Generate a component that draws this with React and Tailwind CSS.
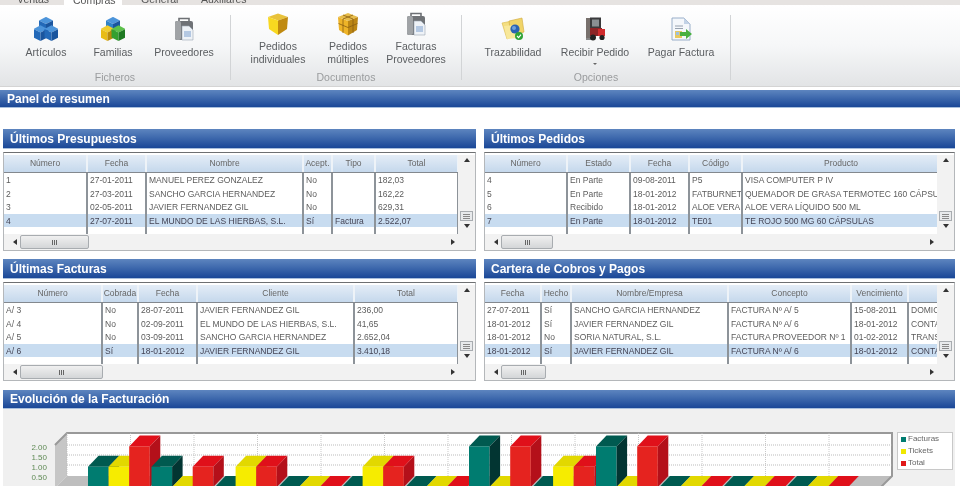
import React from "react";

function Cube({ x, y, s, t, l, r }) {
  const a = s * 0.82, b = s * 0.42;
  return (
    <g>
      <polygon points={`${x},${y} ${x + a},${y - b} ${x},${y - 2 * b} ${x - a},${y - b}`} fill={t} />
      <polygon points={`${x},${y} ${x - a},${y - b} ${x - a},${y - b + s} ${x},${y + s}`} fill={l} />
      <polygon points={`${x},${y} ${x + a},${y - b} ${x + a},${y - b + s} ${x},${y + s}`} fill={r} />
    </g>
  );
}

const Svg = ({ children }) => (
  <svg viewBox="0 0 24 24" className="w-6 h-6 shrink-0">{children}</svg>
);

const Blue = { t: "#4c94da", l: "#2369b8", r: "#1a559e" };

const IconArticulos = () => (
  <Svg>
    <Cube x={12} y={7} s={8.5} {...Blue} />
    <Cube x={6.5} y={15.5} s={8.5} {...Blue} />
    <Cube x={17.5} y={15.5} s={8.5} {...Blue} />
  </Svg>
);
const IconFamilias = () => (
  <Svg>
    <Cube x={12} y={7} s={8.5} t="#4c94da" l="#2f82c8" r="#1a559e" />
    <Cube x={6.5} y={15.5} s={8.5} t="#f0cd2e" l="#e8bc16" r="#b98a0a" />
    <Cube x={17.5} y={15.5} s={8.5} t="#5cc04a" l="#34a030" r="#1f7a22" />
  </Svg>
);
const IconCase = () => (
  <Svg>
    <path d="M7 4 V1.5 H17 V4" fill="none" stroke="#6d7074" strokeWidth="1.6" />
    <rect x="3" y="4" width="18" height="19" rx="2" fill="#6f7276" />
    <rect x="3" y="4" width="6" height="19" rx="2" fill="#a0a3a6" />
    <path d="M10 9 H17 L21 13 V23 H10 Z" fill="#eef2f7" stroke="#9aa6b4" strokeWidth="0.6" />
    <rect x="12" y="14" width="7" height="6" fill="#b4c8e2" />
  </Svg>
);
const IconBox = () => (
  <Svg>
    <polygon points="2,5 12,1.5 22,5 12,8.5" fill="#e8c23a" />
    <polygon points="2,5 12,8.5 12,23 3,17" fill="#f8d820" />
    <polygon points="22,5 12,8.5 12,23 21,17" fill="#c08a10" />
  </Svg>
);
const IconBoxes = () => (
  <Svg>
    <polygon points="2,5 12,1 22,5 12,9" fill="#e6bc4a" />
    <polygon points="2,5 12,9 12,23.5 3,18" fill="#eeb428" />
    <polygon points="22,5 12,9 12,23.5 21,18" fill="#bc8614" />
    <path d="M7 3 L17 7 V21 M17 3 L7 7 V21 M2.5 11.5 L12 15.5 L21.5 11.5" fill="none" stroke="#8a5e10" strokeWidth="0.8" />
  </Svg>
);
const IconTraza = () => (
  <Svg>
    <path d="M1 6 L16 3 L19 16 L6 22 Z" fill="#f4de80" stroke="#d8b848" strokeWidth="0.6" />
    <path d="M8 4 L21 1 L23 15 L10 20 Z" fill="#f0d468" stroke="#d0aa40" strokeWidth="0.6" />
    <path d="M3 9 L15 8 L16 21 L6 22 Z" fill="#f8e89a" />
    <circle cx="14" cy="12" r="4.6" fill="#2a62b4" />
    <circle cx="13" cy="11" r="2" fill="#6fa0dc" />
    <circle cx="18" cy="19" r="4" fill="#2fa336" />
    <path d="M16 19 L17.6 20.6 L20 17.6" fill="none" stroke="#fff" strokeWidth="1.1" />
  </Svg>
);
const IconFork = () => (
  <Svg>
    <rect x="3" y="1" width="4" height="20" fill="#77706c" />
    <path d="M3 22 H10" stroke="#555" strokeWidth="1.4" />
    <path d="M7 0.5 H18 V11 H7 Z" fill="#3a3a3c" />
    <rect x="9" y="2.5" width="7" height="7" fill="#8a8f92" />
    <rect x="7" y="11" width="12" height="8" fill="#8c2426" />
    <rect x="15" y="12" width="7" height="7" fill="#d02c2e" />
    <circle cx="10" cy="20.5" r="3" fill="#222" />
    <circle cx="19" cy="20.5" r="2.6" fill="#222" />
  </Svg>
);
const IconPay = () => (
  <Svg>
    <path d="M3 1 H15 L21 7 V23 H3 Z" fill="#f4f7fb" stroke="#8fa6c4" strokeWidth="0.9" />
    <path d="M15 1 V7 H21 Z" fill="#c2d2e6" />
    <path d="M6 9 H14 M6 11.5 H14" stroke="#7f8c9c" strokeWidth="0.8" />
    <rect x="6" y="14" width="7" height="7" fill="#e6c860" />
    <rect x="7" y="15" width="3" height="3" fill="#9cc0e4" />
    <path d="M11 15 L17 15 L17 12 L23 17 L17 22 L17 19 L11 19 Z" fill="#48b040" />
  </Svg>
);

function Btn({ w, icon, lines, gap }) {
  return (
    <div className={`flex flex-col items-center ${w}`}>
      {icon}
      <div className={`text-center text-[10.5px] leading-[13px] text-[#5a5d60] whitespace-nowrap ${gap}`}>
        {lines.map((l) => (
          <div key={l}>{l}</div>
        ))}
      </div>
    </div>
  );
}

function Group({ w, pl, pt, label, children }) {
  return (
    <div className="flex shrink-0">
      <div className={`flex flex-col justify-between pb-[2px] ${w}`}>
        <div className={`flex ${pl} ${pt}`}>{children}</div>
        <div className="text-center text-[10.5px] leading-[13px] text-[#9a9c9e]">{label}</div>
      </div>
      <div className="mt-[10px] h-[65px] w-px bg-[#d2d4d6]" />
    </div>
  );
}

function Title({ children, cls = "h-5" }) {
  return (
    <div className={`flex items-center pl-[7px] ${cls} bg-linear-to-b from-[#5d85bf] to-[#1a4797] text-white font-bold text-[12px] border-b border-b-[#a9bfdc] whitespace-nowrap`}>
      {children}
    </div>
  );
}

const Up = () => (
  <svg viewBox="0 0 6 4" className="w-[6px] h-[4px]"><polygon points="3,0 6,4 0,4" fill="#333" /></svg>
);
const Down = () => (
  <svg viewBox="0 0 6 4" className="w-[6px] h-[4px]"><polygon points="0,0 6,0 3,4" fill="#333" /></svg>
);
const Left = () => (
  <svg viewBox="0 0 4 6" className="w-[4px] h-[6px]"><polygon points="4,0 4,6 0,3" fill="#333" /></svg>
);
const Right = () => (
  <svg viewBox="0 0 4 6" className="w-[4px] h-[6px]"><polygon points="0,0 4,3 0,6" fill="#333" /></svg>
);

function Table({ title, cols, headers, rows, thumb }) {
  const cells = "overflow-hidden whitespace-nowrap pl-[2px] border-r-2 border-r-[#8d9399]";
  return (
    <div className="flex flex-col h-[122px]">
      <Title>{title}</Title>
      <div className="mt-[3px] h-[99px] flex flex-col border border-[#b4b7ba] border-t-[#6e7072] bg-white">
        <div className="flex flex-1 pt-[2px] min-h-0">
          <div className="flex-1 flex flex-col min-w-0">
            <div className={`grid ${cols} h-[18px] border-b border-b-[#83888e] bg-linear-to-b from-[#e4edf7] to-[#c5d8ec]`}>
              {headers.map((h, i) => (
                <div key={i} className="flex items-center justify-center border-r-2 border-r-[#eef3f8] text-[8.5px] text-[#666] overflow-hidden whitespace-nowrap">
                  {h}
                </div>
              ))}
            </div>
            {rows.map((r, i) => (
              <div key={i} className={`grid ${cols} h-[13.5px] text-[8.5px] leading-[14.5px] ${i === 3 ? "bg-[#c8dcf0] text-[#445]" : "text-[#5c5c5c]"}`}>
                {r.map((c, j) => (
                  <div key={j} className={cells}>{c}</div>
                ))}
              </div>
            ))}
            <div className={`grid ${cols} flex-1`}>
              {headers.map((_, i) => (
                <div key={i} className={cells} />
              ))}
            </div>
          </div>
          <div className="w-[17px] shrink-0 flex flex-col items-center bg-[#f2f2f2]">
            <div className="mt-[3px]"><Up /></div>
            <div className="mt-[49px] w-[13px] h-[10px] border border-[#a8acb0] bg-[#e8eaec] flex flex-col items-center justify-center gap-[1px]">
              <div className="w-[7px] h-px bg-[#888]" />
              <div className="w-[7px] h-px bg-[#888]" />
              <div className="w-[7px] h-px bg-[#888]" />
            </div>
            <div className="mt-[3px]"><Down /></div>
          </div>
        </div>
        <div className="h-[16px] flex items-center bg-[#f2f2f2]">
          <div className="ml-[9px]"><Left /></div>
          <div className={`ml-[3px] h-[14px] ${thumb} flex items-center justify-center gap-[1px] rounded-[2px] border border-[#a8acb0] bg-linear-to-b from-[#f0f0f0] to-[#d4d6d8]`}>
            <div className="w-px h-[5px] bg-[#666]" />
            <div className="w-px h-[5px] bg-[#666]" />
            <div className="w-px h-[5px] bg-[#666]" />
          </div>
          <div className="ml-auto mr-[20px]"><Right /></div>
        </div>
      </div>
    </div>
  );
}

const C = {
  teal: ["#007c70", "#005a50", "#023532"],
  yel: ["#f6ec00", "#e2d800", "#c4bc00"],
  red: ["#e5231f", "#e0101a", "#b4101a"],
};
const data = [
  [1, 1, 2], [1, 0, 1], [0, 1, 1], [0, 0, 0], [0, 1, 1], [0, 0, 0],
  [2, 0, 2], [0, 1, 1], [2, 0, 2], [0, 0, 0], [0, 0, 0], [0, 0, 0],
];

function Bar({ x, v, c }) {
  const w = 20.6, dx = 10.5, dy = 11, base = 487;
  const y = base - 20.3 * v;
  return (
    <g>
      <polygon points={`${x},${y} ${x + dx},${y - dy} ${x + w + dx},${y - dy} ${x + w},${y}`} fill={c[1]} />
      <rect x={x} y={y} width={w} height={base - y + 2} fill={c[0]} />
      <polygon points={`${x + w},${y} ${x + w + dx},${y - dy} ${x + w + dx},${base - dy} ${x + w},${base}`} fill={c[2]} />
    </g>
  );
}

function Chart() {
  const vs = Array.from({ length: 13 }, (_, i) => 67 + 63.5 * i);
  return (
    <svg viewBox="3 409 890 77" className="w-[890px] h-[77px] shrink-0">
      <polygon points="67,476 892,476 880,488 55,488" fill="#bebebe" />
      <polygon points="55,445 67,433 67,476 55,488" fill="#c6c6c6" />
      <rect x="67" y="433" width="825" height="43" fill="#fff" />
      <path d="M55,445 L67,433 H892 V476 L880,488" fill="none" stroke="#999" strokeWidth="2" />
      {[445, 455, 465].map((y) => (
        <line key={y} x1="67" x2="892" y1={y} y2={y} stroke="#aaa" strokeWidth="0.8" strokeDasharray="1 1" />
      ))}
      {vs.map((x) => (
        <line key={x} x1={x} x2={x} y1="433" y2="476" stroke="#bbb" strokeWidth="0.8" strokeDasharray="1 1" />
      ))}
      {data.map((g, i) =>
        [C.teal, C.yel, C.red].map((c, j) => (
          <Bar key={`${i}-${j}`} x={88 + 63.5 * i + 20.6 * j} v={g[j]} c={c} />
        ))
      )}
      {[["2.00", 450], ["1.50", 460], ["1.00", 470], ["0.50", 480]].map(([t, y]) => (
        <text key={t} x="47" y={y} textAnchor="end" fontSize="8" fill="#5f8a55" fontFamily="Liberation Sans">{t}</text>
      ))}
    </svg>
  );
}

function Legend() {
  return (
    <div className="ml-[4px] mt-[23px] w-[56px] h-[38px] bg-white border border-[#c8c8c8] flex flex-col justify-center gap-[2px] pl-[3px] text-[8px] leading-[10px] text-[#666]">
      {[["Facturas", "bg-[#007c70]"], ["Tickets", "bg-[#f0e800]"], ["Total", "bg-[#e01818]"]].map(([t, c]) => (
        <div key={t} className="flex items-center gap-[2px]">
          <div className={`w-[5px] h-[5px] ${c}`} />
          <span>{t}</span>
        </div>
      ))}
    </div>
  );
}

export default function App() {
  return (
    <div className="w-[960px] h-[486px] overflow-hidden bg-white blur-[0.5px]" style={{ fontFamily: '"Liberation Sans", Arial, sans-serif' }}>
      <div className="h-[5px] flex items-end overflow-hidden bg-[#e6e3e1] text-[10.5px] leading-[10px] text-[#555]">
        <div className="w-[64px] pl-[17px] shrink-0 mb-[1px]">Ventas</div>
        <div className="w-[58px] h-[5px] pl-[9px] shrink-0 bg-white flex items-end">Compras</div>
        <div className="w-[79px] pl-[19px] shrink-0 mb-[1px]">General</div>
        <div className="shrink-0 mb-[1px]">Auxiliares</div>
      </div>
      <div className="h-[82px] flex bg-linear-to-b from-white via-[#f6f7f8] to-[#e2e4e6] border-b border-b-[#d4d4d4]">
        <Group w="w-[230px]" pl="pl-[13px]" pt="pt-[12px]" label="Ficheros">
          <Btn w="w-[66px]" icon={<IconArticulos />} lines={["Artículos"]} gap="mt-[5px]" />
          <Btn w="w-[68px]" icon={<IconFamilias />} lines={["Familias"]} gap="mt-[5px]" />
          <Btn w="w-[74px]" icon={<IconCase />} lines={["Proveedores"]} gap="mt-[5px]" />
        </Group>
        <Group w="w-[230px]" pl="pl-[13px]" pt="pt-[7px]" label="Documentos">
          <Btn w="w-[68px]" icon={<IconBox />} lines={["Pedidos", "individuales"]} gap="mt-[4px]" />
          <Btn w="w-[72px]" icon={<IconBoxes />} lines={["Pedidos", "múltiples"]} gap="mt-[4px]" />
          <Btn w="w-[64px]" icon={<IconCase />} lines={["Facturas", "Proveedores"]} gap="mt-[4px]" />
        </Group>
        <Group w="w-[268px]" pl="pl-[12px]" pt="pt-[12px]" label="Opciones">
          <Btn w="w-[78px]" icon={<IconTraza />} lines={["Trazabilidad"]} gap="mt-[5px]" />
          <div className="flex flex-col items-center w-[86px]">
            <IconFork />
            <div className="mt-[5px] text-[10.5px] leading-[13px] text-[#5a5d60] whitespace-nowrap">Recibir Pedido</div>
            <div className="mt-[4px] w-0 h-0 border-x-[2px] border-x-transparent border-t-[2px] border-t-[#666]" />
          </div>
          <Btn w="w-[86px]" icon={<IconPay />} lines={["Pagar Factura"]} gap="mt-[5px]" />
        </Group>
      </div>
      <div className="mt-[3px]">
        <Title cls="h-[18px]">Panel de resumen</Title>
      </div>
      <div className="mt-[21px] ml-[3px] grid grid-cols-[473px_471px] gap-x-2 gap-y-[8px]">
        <Table
          title="Últimos Presupuestos"
          cols="grid-cols-[84px_59px_157px_29px_43px_83px]"
          headers={["Número", "Fecha", "Nombre", "Acept.", "Tipo", "Total"]}
          rows={[
            ["1", "27-01-2011", "MANUEL PEREZ GONZALEZ", "No", "", "182,03"],
            ["2", "27-03-2011", "SANCHO GARCIA HERNANDEZ", "No", "", "162,22"],
            ["3", "02-05-2011", "JAVIER FERNANDEZ GIL", "No", "", "629,31"],
            ["4", "27-07-2011", "EL MUNDO DE LAS HIERBAS, S.L.", "Sí", "Factura", "2.522,07"],
          ]}
          thumb="w-[69px]"
        />
        <Table
          title="Últimos Pedidos"
          cols="grid-cols-[83px_63px_59px_53px_198px]"
          headers={["Número", "Estado", "Fecha", "Código", "Producto"]}
          rows={[
            ["4", "En Parte", "09-08-2011", "P5", "VISA COMPUTER P IV"],
            ["5", "En Parte", "18-01-2012", "FATBURNET", "QUEMADOR DE GRASA TERMOTEC 160 CÁPSULAS"],
            ["6", "Recibido", "18-01-2012", "ALOE VERA", "ALOE VERA LÍQUIDO 500 ML"],
            ["7", "En Parte", "18-01-2012", "TE01", "TE ROJO 500 MG 60 CÁPSULAS"],
          ]}
          thumb="w-[52px]"
        />
        <Table
          title="Últimas Facturas"
          cols="grid-cols-[99px_36px_59px_157px_104px]"
          headers={["Número", "Cobrada", "Fecha", "Cliente", "Total"]}
          rows={[
            ["A/ 3", "No", "28-07-2011", "JAVIER FERNANDEZ GIL", "236,00"],
            ["A/ 4", "No", "02-09-2011", "EL MUNDO DE LAS HIERBAS, S.L.", "41,65"],
            ["A/ 5", "No", "03-09-2011", "SANCHO GARCIA HERNANDEZ", "2.652,04"],
            ["A/ 6", "Sí", "18-01-2012", "JAVIER FERNANDEZ GIL", "3.410,18"],
          ]}
          thumb="w-[83px]"
        />
        <Table
          title="Cartera de Cobros y Pagos"
          cols="grid-cols-[57px_30px_157px_123px_57px_32px]"
          headers={["Fecha", "Hecho", "Nombre/Empresa", "Concepto", "Vencimiento", ""]}
          rows={[
            ["27-07-2011", "Sí", "SANCHO GARCIA HERNANDEZ", "FACTURA Nº A/ 5", "15-08-2011", "DOMICILIADO"],
            ["18-01-2012", "Sí", "JAVIER FERNANDEZ GIL", "FACTURA Nº A/ 6", "18-01-2012", "CONTADO"],
            ["18-01-2012", "No", "SORIA NATURAL, S.L.", "FACTURA PROVEEDOR Nº 1", "01-02-2012", "TRANSFER"],
            ["18-01-2012", "Sí", "JAVIER FERNANDEZ GIL", "FACTURA Nº A/ 6", "18-01-2012", "CONTADO"],
          ]}
          thumb="w-[45px]"
        />
      </div>
      <div className="mt-[9px] mx-[3px] w-[952px]">
        <Title cls="h-[19px]">Evolución de la Facturación</Title>
        <div className="flex bg-[#f0f0f0] h-[77px]">
          <Chart />
          <Legend />
        </div>
      </div>
    </div>
  );
}
